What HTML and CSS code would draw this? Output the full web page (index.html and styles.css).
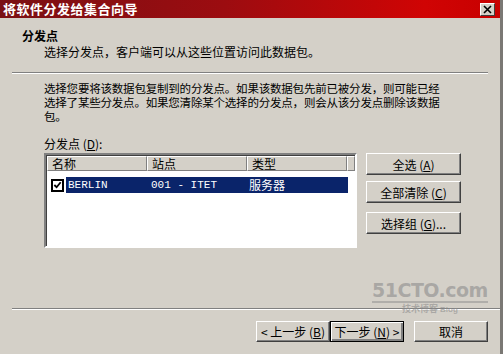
FILE: index.html
```html
<!DOCTYPE html>
<html lang="zh-CN">
<head>
  <meta charset="UTF-8">
  <title>将软件分发给集合向导</title>
  <link rel="stylesheet" href="styles.css">
</head>
<body>
  <div class="window">
    <div class="titlebar">
      <span class="title">将软件分发给集合向导</span>
      <span class="close-btn">
        <svg viewBox="0 0 10 9" width="10" height="9">
          <path d="M1 1L8 8M8 1L1 8" stroke="#000" stroke-width="1.6" fill="none"/>
        </svg>
      </span>
    </div>
    <div class="header">
      <div class="header-title">分发点</div>
      <div class="header-sub">选择分发点，客户端可以从这些位置访问此数据包。</div>
    </div>
    <div class="separator"></div>
    <div class="content">
      <div class="desc">
        <div>选择您要将该数据包复制到的分发点。如果该数据包先前已被分发，则可能已经</div>
        <div>选择了某些分发点。如果您清除某个选择的分发点，则会从该分发点删除该数据</div>
        <div>包。</div>
      </div>
      <div class="list-label">分发点 (<u>D</u>):</div>
      <div class="list-row">
        <div class="listview">
          <div class="lv-header">
            <span class="lv-col col-name">名称</span>
            <span class="lv-col col-site">站点</span>
            <span class="lv-col col-type">类型</span>
            <span class="lv-col col-rest"></span>
          </div>
          <div class="lv-item">
            <span class="check">
              <svg viewBox="0 0 10 10" width="10" height="10">
                <path d="M1.5 5L4 7.5L8.5 2" stroke="#000" stroke-width="2" fill="none"/>
              </svg>
            </span>
            <span class="item-sel">
              <span class="cell cell-name">BERLIN</span>
              <span class="cell cell-site">001 - ITET</span>
              <span class="cell cell-type">服务器</span>
            </span>
          </div>
        </div>
        <div class="side-buttons">
          <button class="btn">全选 (<u>A</u>)</button>
          <button class="btn">全部清除 (<u>C</u>)</button>
          <button class="btn btn-group">选择组 (<u>G</u>)...</button>
        </div>
      </div>
    </div>
    <div class="separator bottom-sep"></div>
    <div class="footer">
      <button class="btn nav">&lt; 上一步 (<u>B</u>)</button>
      <button class="btn nav default">下一步 (<u>N</u>) &gt;</button>
      <button class="btn nav cancel">取消</button>
    </div>
    <div class="watermark">
      <span class="wm-big">51CTO.com</span>
      <span class="wm-small">技术博客 <i>Blog</i></span>
    </div>
  </div>
</body>
</html>
```

FILE: styles.css
```css
body {
  margin: 0;
  background: #d4d0c8;
  font-family: "Noto Sans CJK SC", "Liberation Sans", sans-serif;
  font-size: 12px;
  color: #000;
}
.window {
  position: relative;
  width: 503px;
  height: 354px;
  box-sizing: border-box;
  background: #d4d0c8;
  border-right: 3px solid #7a7874;
  display: flex;
  flex-direction: column;
  overflow: hidden;
}
.titlebar {
  height: 18px;
  display: flex;
  align-items: center;
  justify-content: space-between;
  padding: 0 5px 0 3px;
  background: linear-gradient(to right, #7a1014, #9c0c10 45%, #d00404 85%, #c80000);
  color: #fff;
  font-weight: bold;
  font-size: 13px;
}
.title {
  letter-spacing: 0.5px;
  line-height: 18px;
}
.close-btn {
  width: 15px;
  height: 13px;
  background: #d4d0c8;
  border: 1px solid;
  border-color: #fff #404040 #404040 #fff;
  box-sizing: border-box;
  display: flex;
  align-items: center;
  justify-content: center;
}
.header {
  height: 54px;
  padding: 10px 0 0 22px;
  box-sizing: border-box;
}
.header-title {
  font-weight: bold;
  line-height: 16px;
}
.header-sub {
  margin-left: 22px;
  line-height: 16px;
}
.separator {
  margin: 0 12px 0 12px;
  border-top: 1px solid #808080;
  border-bottom: 1px solid #fff;
}
.content {
  padding: 7px 0 0 44px;
  height: 234px;
  box-sizing: border-box;
}
.desc {
  font-size: 11.5px;
  line-height: 14px;
  letter-spacing: -0.2px;
  white-space: nowrap;
}
.list-label {
  margin-top: 14px;
  line-height: 14px;
}
.list-row {
  display: flex;
  margin-top: 2px;
  gap: 9px;
}
.listview {
  width: 313px;
  height: 95px;
  box-sizing: border-box;
  background: #fff;
  border: 2px solid;
  border-color: #808080 #fff #fff #808080;
  box-shadow: inset 1px 1px 0 #404040;
}
.lv-header {
  display: flex;
  height: 15px;
  margin: 1px 0 0 1px;
}
.lv-col {
  box-sizing: border-box;
  background: #d4d0c8;
  border: 1px solid;
  border-color: #fff #808080 #808080 #fff;
  line-height: 13px;
  padding-left: 4px;
}
.col-name { width: 100px; }
.col-site { width: 100px; }
.col-type { width: 100px; }
.col-rest { width: 8px; }
.lv-item {
  display: flex;
  align-items: center;
  margin-top: 6px;
  height: 16px;
}
.check {
  width: 13px;
  height: 13px;
  box-sizing: border-box;
  border: 2px solid #000;
  background: #fff;
  margin: 0 2px 0 5px;
  display: flex;
  align-items: center;
  justify-content: center;
}
.item-sel {
  display: flex;
  height: 16px;
  width: 282px;
  background: #0a246a;
  color: #fff;
  align-items: center;
}
.cell {
  line-height: 16px;
}
.cell-name {
  width: 83px;
  padding-left: 2px;
  font-family: "Liberation Mono", monospace;
  font-size: 11px;
}
.cell-site {
  width: 98px;
  font-family: "Liberation Mono", monospace;
  font-size: 11px;
}
.cell-type {
  width: 90px;
}
.side-buttons {
  display: flex;
  flex-direction: column;
  gap: 6px;
}
.btn {
  width: 95px;
  height: 22px;
  box-sizing: border-box;
  background: #d4d0c8;
  border: 1px solid;
  border-color: #fff #404040 #404040 #fff;
  box-shadow: inset -1px -1px 0 #808080;
  font-family: "Noto Sans CJK SC", "Liberation Sans", sans-serif;
  font-size: 12px;
  padding: 0;
  color: #000;
}
.btn-group {
  margin-top: 3px;
}
.bottom-sep {
  margin-right: 0;
}
.footer {
  display: flex;
  padding: 11px 0 0 256px;
}
.btn.nav {
  width: 74px;
  height: 21px;
}
.btn.default {
  border: 1px solid #000;
  box-shadow: inset 1px 1px 0 #fff, inset -2px -2px 0 #808080;
}
.btn.cancel {
  margin-left: 10px;
}
/* blog watermark sitting above the footer line */
.watermark {
  position: absolute;
  left: 372px;
  top: 280px;
  display: flex;
  flex-direction: column;
  align-items: flex-start;
  color: rgba(140, 140, 140, 0.6);
  pointer-events: none;
}
.wm-big {
  font-family: "DejaVu Sans", sans-serif;
  font-weight: bold;
  font-size: 19px;
  line-height: 21px;
  letter-spacing: -0.5px;
  border-bottom: 2px solid rgba(140, 140, 140, 0.5);
}
.wm-small {
  font-weight: bold;
  font-size: 9px;
  line-height: 10px;
  margin-left: 30px;
  margin-top: 1px;
}
.wm-small i {
  font-size: 8px;
  font-style: normal;
  font-family: "Liberation Sans", sans-serif;
}
```
